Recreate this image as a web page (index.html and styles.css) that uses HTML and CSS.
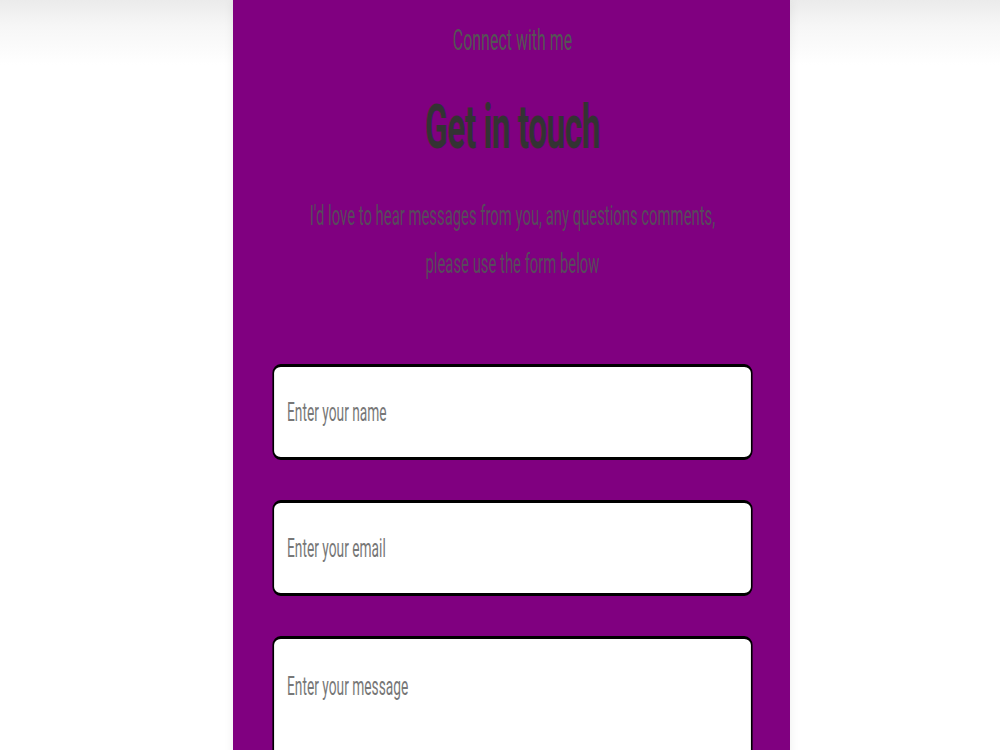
FILE: index.html
```html
<!DOCTYPE html>
<html lang="en">
<head>
<meta charset="utf-8">
<title>Get in touch</title>
<link rel="stylesheet" href="styles.css">
</head>
<body>
<main class="page">
  <section class="panel">
    <div class="content">
      <p class="eyebrow">Connect with me</p>
      <h1 class="title">Get in touch</h1>
      <p class="intro">I'd love to hear messages from you, any questions comments,<br>please use the form below</p>
      <form class="form">
        <input class="field" type="text" placeholder="Enter your name">
        <input class="field" type="email" placeholder="Enter your email">
        <textarea class="field field-message" placeholder="Enter your message"></textarea>
      </form>
    </div>
  </section>
</main>
</body>
</html>
```

FILE: styles.css
```css
html, body {
  margin: 0;
  padding: 0;
  height: 100%;
}

body {
  background: linear-gradient(#ebebeb 0, #f6f6f6 25px, #ffffff 65px);
  font-family: Roboto, "Liberation Sans", sans-serif;
  overflow: hidden;
}

.page {
  display: flex;
  justify-content: center;
  padding-left: 23px;
  min-height: 100%;
}

.panel {
  width: 557px;
  background: #800080;
  box-shadow: 0 0 10px rgba(0, 0, 0, 0.07);
  padding: 0 38px 0 39px;
  box-sizing: border-box;
  display: flex;
  flex-direction: column;
  align-items: center;
}

/* the whole block is drawn horizontally condensed, as in the reference */
.content {
  flex: none;
  width: 873px;
  transform: scaleX(0.55);
  text-align: center;
}

.eyebrow {
  margin: 0;
  padding-top: 22px;
  font-size: 29px;
  line-height: 36px;
  color: #555;
}

.title {
  margin: 0;
  padding-top: 34px;
  font-size: 61px;
  line-height: 70px;
  letter-spacing: -1px;
  font-weight: 700;
  color: #333;
}

.intro {
  margin: 0;
  padding-top: 30px;
  font-size: 27px;
  line-height: 48px;
  color: #584a5c;
}

.form {
  display: flex;
  flex-direction: column;
  gap: 40px;
  padding-top: 76px;
}

.field {
  display: block;
  width: 100%;
  height: 96px;
  box-sizing: border-box;
  border-style: solid;
  border-color: #000;
  border-width: 3px 3.6px;
  border-radius: 15px / 9px;
  background: #fff;
  padding: 0 23.6px;
  font-family: Roboto, "Liberation Sans", sans-serif;
  font-size: 25px;
  color: #333;
  outline: none;
}

.field::placeholder {
  color: #777;
}

.field-message {
  height: 220px;
  padding-top: 33px;
  resize: none;
}
```
